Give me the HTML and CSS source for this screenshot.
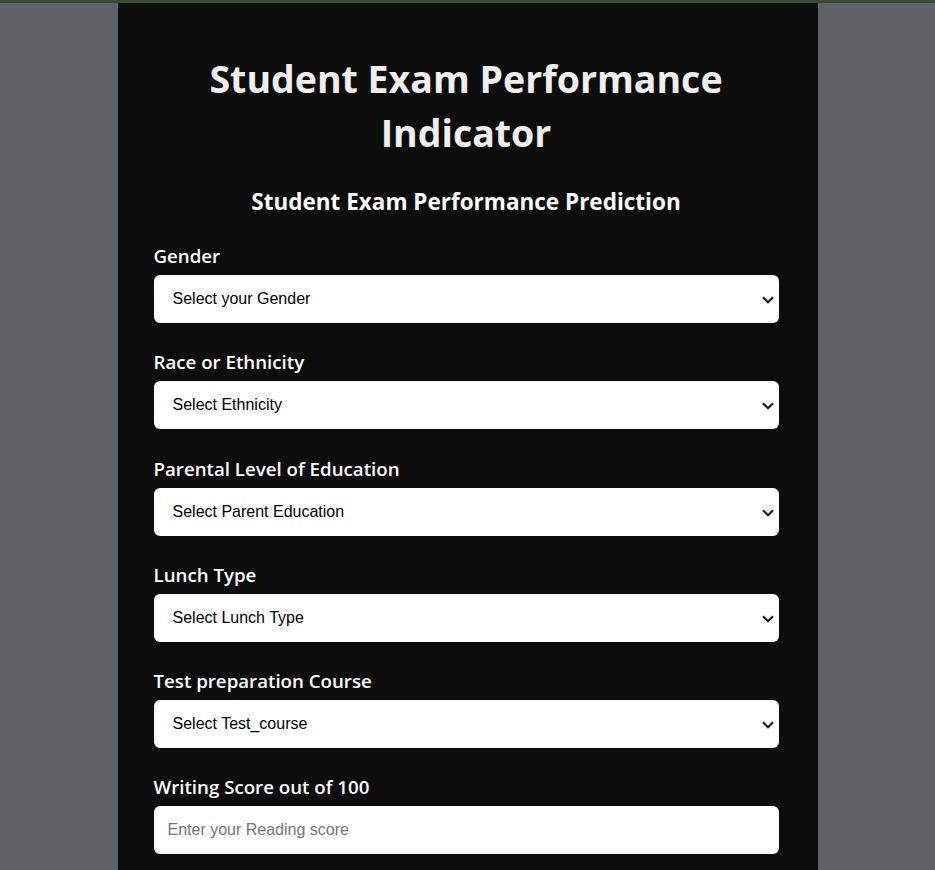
FILE: index.html
```html
<!DOCTYPE html>
<html lang="en">
<head>
<meta charset="utf-8">
<title>Student Exam Performance Indicator</title>
<link rel="stylesheet" href="styles.css">
</head>
<body>
<div class="topbar"></div>
<main class="card">
  <h1 class="title">Student Exam Performance Indicator</h1>
  <form class="form">
    <h2 class="subtitle">Student Exam Performance Prediction</h2>
    <div class="group">
      <label class="label">Gender</label>
      <div class="select-wrap">
        <select class="field select">
          <option selected disabled>Select your Gender</option>
          <option>Male</option>
          <option>Female</option>
        </select>
        <svg class="chev" width="12" height="8" viewBox="0 0 12 8"><path d="M1 1.3 L6 6.3 L11 1.3" fill="none" stroke="#1b1b1b" stroke-width="2.2"/></svg>
      </div>
    </div>
    <div class="group">
      <label class="label">Race or Ethnicity</label>
      <div class="select-wrap">
        <select class="field select">
          <option selected disabled>Select Ethnicity</option>
        </select>
        <svg class="chev" width="12" height="8" viewBox="0 0 12 8"><path d="M1 1.3 L6 6.3 L11 1.3" fill="none" stroke="#1b1b1b" stroke-width="2.2"/></svg>
      </div>
    </div>
    <div class="group">
      <label class="label">Parental Level of Education</label>
      <div class="select-wrap">
        <select class="field select">
          <option selected disabled>Select Parent Education</option>
        </select>
        <svg class="chev" width="12" height="8" viewBox="0 0 12 8"><path d="M1 1.3 L6 6.3 L11 1.3" fill="none" stroke="#1b1b1b" stroke-width="2.2"/></svg>
      </div>
    </div>
    <div class="group">
      <label class="label">Lunch Type</label>
      <div class="select-wrap">
        <select class="field select">
          <option selected disabled>Select Lunch Type</option>
        </select>
        <svg class="chev" width="12" height="8" viewBox="0 0 12 8"><path d="M1 1.3 L6 6.3 L11 1.3" fill="none" stroke="#1b1b1b" stroke-width="2.2"/></svg>
      </div>
    </div>
    <div class="group">
      <label class="label">Test preparation Course</label>
      <div class="select-wrap">
        <select class="field select">
          <option selected disabled>Select Test_course</option>
        </select>
        <svg class="chev" width="12" height="8" viewBox="0 0 12 8"><path d="M1 1.3 L6 6.3 L11 1.3" fill="none" stroke="#1b1b1b" stroke-width="2.2"/></svg>
      </div>
    </div>
    <div class="group">
      <label class="label">Writing Score out of 100</label>
      <input class="field input" type="number" placeholder="Enter your Reading score">
    </div>
  </form>
</main>
</body>
</html>
```
FILE: styles.css
```css
html, body {
  margin: 0;
  padding: 0;
}
body {
  background: #5f6267;
  font-family: "Open Sans", "Noto Sans", sans-serif;
  min-height: 870px;
}
.topbar {
  height: 3px;
  background: #3b4a39;
}
.card {
  width: 700px;
  margin: 0 auto;
  background: #0d0d0d;
  padding: 49px 39px 20px 36px;
  box-sizing: border-box;
  min-height: 867px;
}
.title {
  margin: 0;
  text-align: center;
  color: #efefef;
  font-size: 37.5px;
  line-height: 54px;
  font-weight: 700;
}
.form {
  display: flex;
  flex-direction: column;
}
.subtitle {
  margin: 26px 0 25px;
  text-align: center;
  color: #ffffff;
  font-size: 22.5px;
  line-height: 32px;
  font-weight: 700;
}
.group {
  display: flex;
  flex-direction: column;
  margin-bottom: 26.3px;
}
.label {
  color: #ffffff;
  font-size: 18.7px;
  line-height: 26px;
  font-weight: 600;
  margin-bottom: 6px;
}
.field {
  height: 48px;
  border: none;
  border-radius: 6px;
  background: #ffffff;
  font-family: "Liberation Sans", Arial, sans-serif;
  font-size: 16px;
  color: #000000;
  box-sizing: border-box;
  outline: none;
}
.select-wrap {
  position: relative;
  display: flex;
  flex-direction: column;
}
.select {
  appearance: none;
  -webkit-appearance: none;
  padding: 0 30px 0 19px;
  line-height: 48px;
}
.chev {
  position: absolute;
  right: 5px;
  top: 21px;
  pointer-events: none;
}
.input {
  padding: 0 14px;
}
.input::placeholder {
  color: #757575;
}
```
